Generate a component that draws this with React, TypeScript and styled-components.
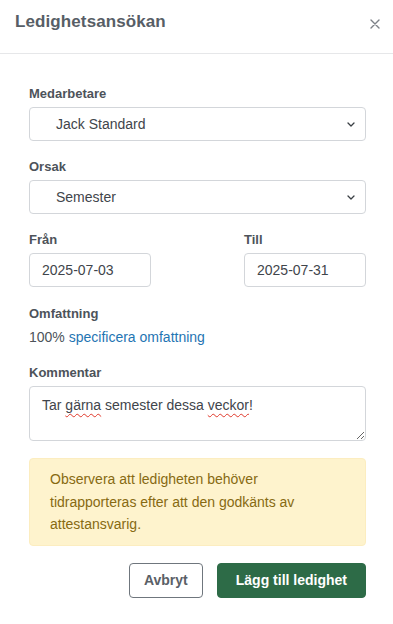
import React from "react";
import styled, { createGlobalStyle } from "styled-components";

const Global = createGlobalStyle`
  html, body {
    margin: 0;
    padding: 0;
    background: #ffffff;
  }
  body {
    font-family: "Liberation Sans", Arial, sans-serif;
    color: #4a5057;
  }
  * { box-sizing: border-box; }
`;

const Modal = styled.div`
  width: 393px;
  min-height: 624px;
  background: #fff;
`;

const Header = styled.div`
  height: 54px;
  display: flex;
  align-items: center;
  justify-content: space-between;
  padding: 0 9px 10px 15px;
  border-bottom: 1px solid #e6e7e9;
`;

const Title = styled.h1`
  margin: 0;
  font-size: 17px;
  font-weight: 700;
  color: #575e66;
  letter-spacing: 0.1px;
`;

const Close = styled.button`
  border: none;
  background: none;
  padding: 4px;
  margin-top: 4px;
  display: flex;
  color: #7d8288;
  cursor: pointer;
`;

const Body = styled.div`
  padding: 31px 27px 20px 29px;
  display: flex;
  flex-direction: column;
  gap: 17px;
`;

const Field = styled.div`
  display: flex;
  flex-direction: column;
  gap: 4px;
`;

const Row = styled.div`
  display: grid;
  grid-template-columns: 122px 122px;
  justify-content: space-between;
  margin-bottom: 1px;
`;

const Label = styled.label`
  font-size: 13px;
  font-weight: 700;
  line-height: 18px;
  color: #4d535a;
`;

const SelectBox = styled.div`
  height: 34px;
  border: 1px solid #d3d6da;
  border-radius: 4px;
  display: flex;
  align-items: center;
  justify-content: space-between;
  padding: 0 10px 0 26px;
  font-size: 14px;
  color: #3f454b;
`;

const DateInput = styled.div`
  height: 34px;
  border: 1px solid #d3d6da;
  border-radius: 4px;
  display: flex;
  align-items: center;
  padding: 0 12px;
  font-size: 14px;
  color: #3f454b;
`;

const Scope = styled.div`
  font-size: 14px;
  line-height: 20px;
  color: #4d535a;
`;

const Link = styled.a`
  color: #1f75b3;
  text-decoration: none;
`;

const TextArea = styled.div`
  height: 55px;
  border: 1px solid #d3d6da;
  border-radius: 4px;
  padding: 8px 12px;
  font-size: 14px;
  line-height: 20px;
  color: #3f454b;
  resize: vertical;
  overflow: auto;
`;

const Misspelled = styled.span`
  text-decoration: underline wavy #e0392b;
  text-decoration-thickness: 1px;
  text-underline-offset: 3px;
`;

const Alert = styled.div`
  background: #fef3cd;
  border: 1px solid #fcedc0;
  border-radius: 4px;
  padding: 9px 50px 9px 20px;
  font-size: 14px;
  line-height: 22.5px;
  color: #876a12;
`;

const Actions = styled.div`
  display: flex;
  justify-content: flex-end;
  gap: 14px;
`;

const Button = styled.button<{ $primary?: boolean }>`
  height: 35px;
  padding: 0 ${(p) => (p.$primary ? "18px" : "14px")};
  border-radius: 4px;
  font-family: "Liberation Sans", Arial, sans-serif;
  font-size: 14px;
  font-weight: 700;
  cursor: pointer;
  border: 1px solid ${(p) => (p.$primary ? "#2d6b47" : "#6f767d")};
  background: ${(p) => (p.$primary ? "#2d6b47" : "#ffffff")};
  color: ${(p) => (p.$primary ? "#ffffff" : "#5a6067")};
`;

const Chevron = () => (
  <svg width="8" height="5" viewBox="0 0 8 5" fill="none">
    <path d="M1 1l3 3 3-3" stroke="#3a3f44" strokeWidth="1.3" strokeLinecap="round" strokeLinejoin="round" />
  </svg>
);

export default function App() {
  return (
    <>
      <Global />
      <Modal>
        <Header>
          <Title>Ledighetsansökan</Title>
          <Close aria-label="Stäng">
            <svg width="10" height="10" viewBox="0 0 10 10">
              <path d="M1 1l8 8M9 1l-8 8" stroke="#7d8288" strokeWidth="1.4" strokeLinecap="round" />
            </svg>
          </Close>
        </Header>
        <Body>
          <Field>
            <Label>Medarbetare</Label>
            <SelectBox>
              <span>Jack Standard</span>
              <Chevron />
            </SelectBox>
          </Field>
          <Field>
            <Label>Orsak</Label>
            <SelectBox>
              <span>Semester</span>
              <Chevron />
            </SelectBox>
          </Field>
          <Row>
            <Field>
              <Label>Från</Label>
              <DateInput>2025-07-03</DateInput>
            </Field>
            <Field>
              <Label>Till</Label>
              <DateInput>2025-07-31</DateInput>
            </Field>
          </Row>
          <Field>
            <Label>Omfattning</Label>
            <Scope>
              100% <Link href="#">specificera omfattning</Link>
            </Scope>
          </Field>
          <Field>
            <Label>Kommentar</Label>
            <TextArea>
              Tar <Misspelled>gärna</Misspelled> semester dessa <Misspelled>veckor</Misspelled>!
            </TextArea>
          </Field>
          <Alert>
            Observera att ledigheten behöver tidrapporteras efter att den godkänts av attestansvarig.
          </Alert>
          <Actions>
            <Button>Avbryt</Button>
            <Button $primary>Lägg till ledighet</Button>
          </Actions>
        </Body>
      </Modal>
    </>
  );
}
